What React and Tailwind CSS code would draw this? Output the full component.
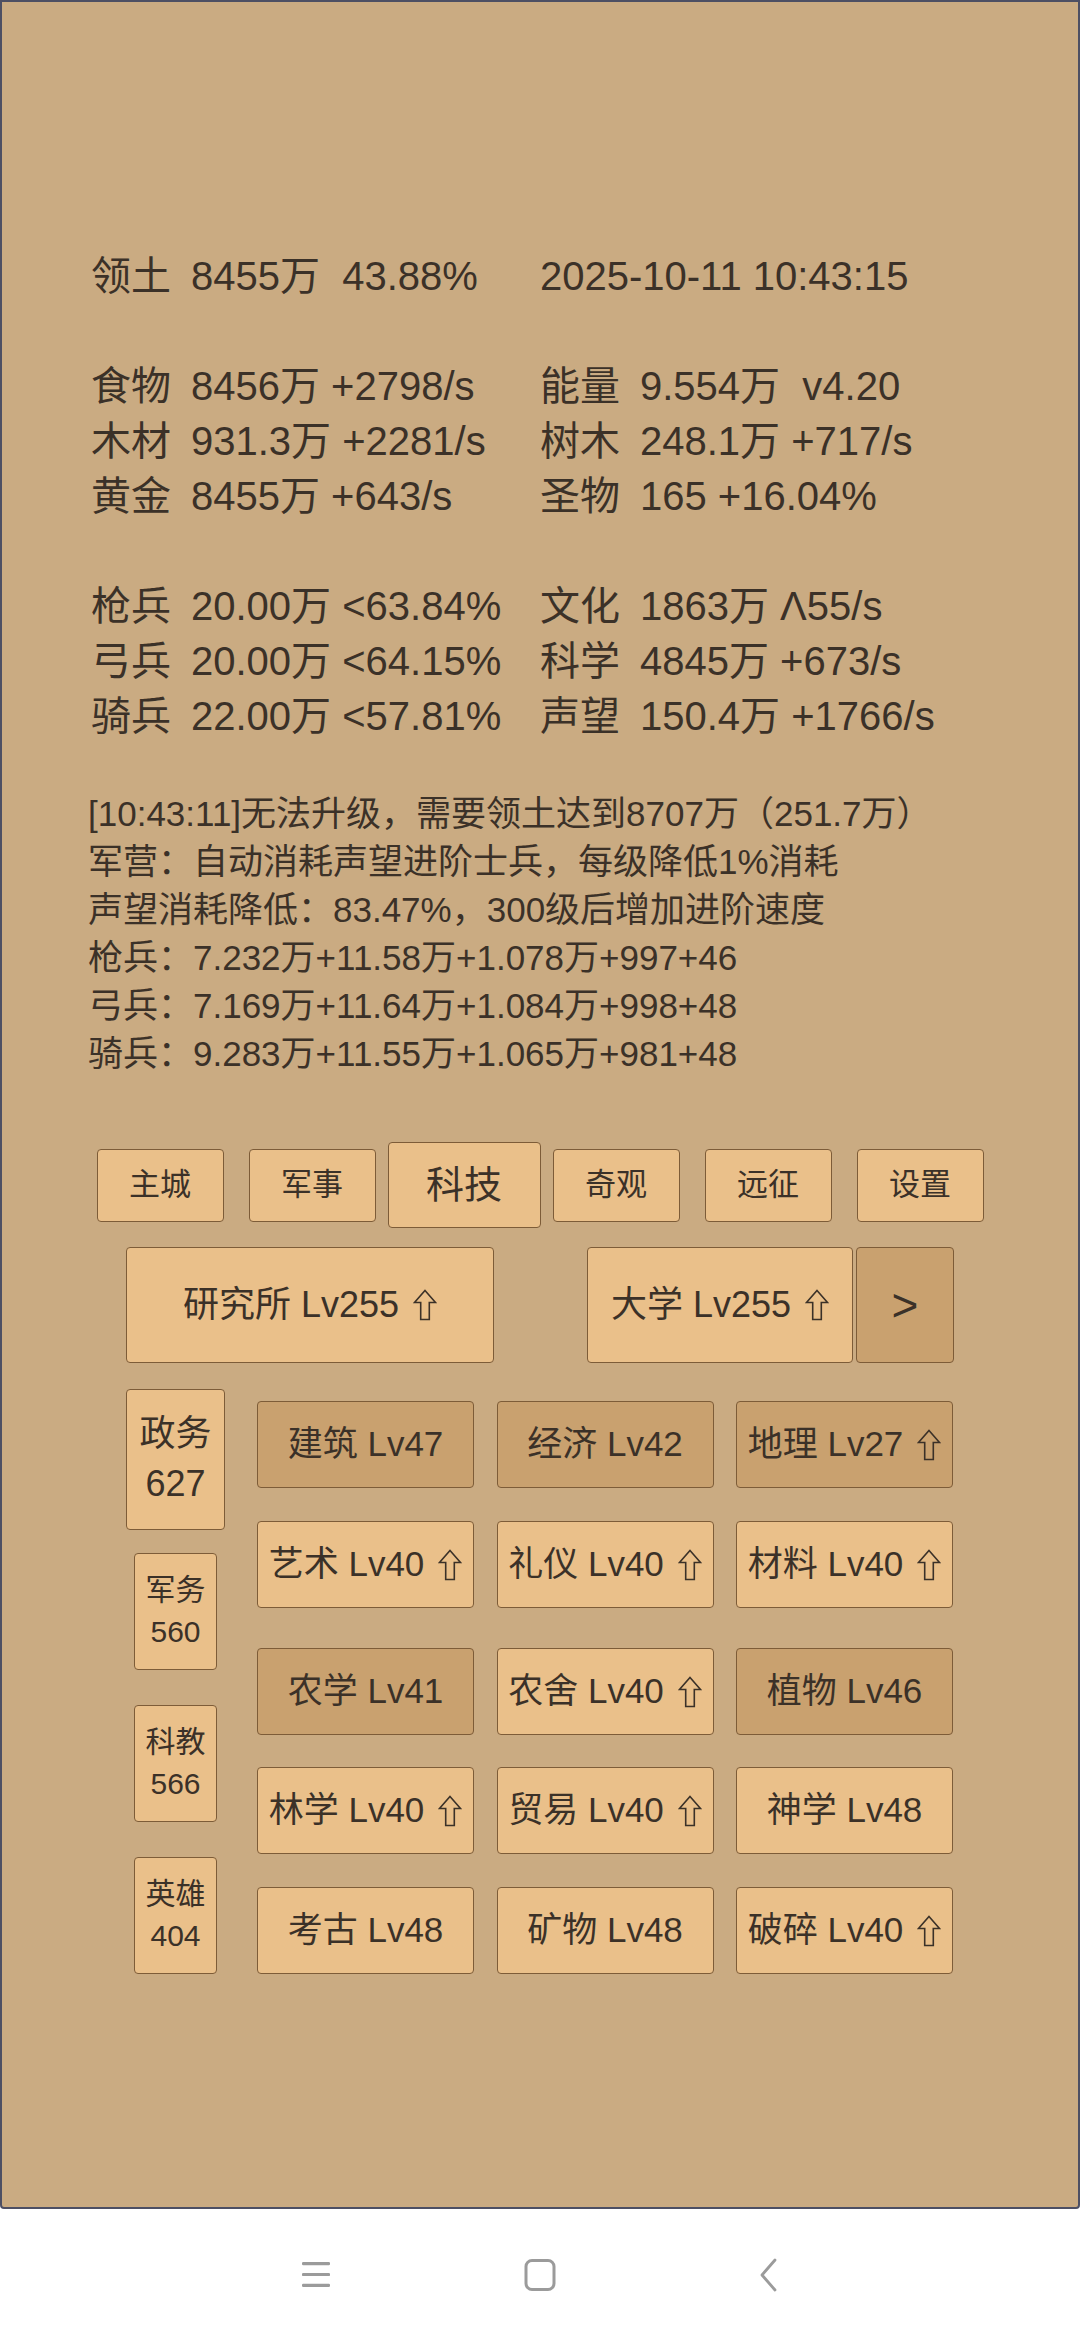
import React from "react";

const Up = () => (
  <svg width="24" height="32" viewBox="0 0 24 32" className="ml-[14px] shrink-0">
    <path
      d="M12 1.5 L22.5 13.5 L16.3 13.5 L16.3 30.5 L7.7 30.5 L7.7 13.5 L1.5 13.5 Z"
      fill="none"
      stroke="#3b3128"
      strokeWidth="1.6"
      strokeLinejoin="miter"
    />
  </svg>
);

function Row({ l, v, rl, rv }) {
  return (
    <div className="flex h-[55px]">
      <div className="w-[449px] flex">
        <span className="w-[100px]">{l}</span>
        <span>{v}</span>
      </div>
      <div className="flex">
        {rl ? <span className="w-[100px]">{rl}</span> : null}
        <span>{rv}</span>
      </div>
    </div>
  );
}

function Cell({ text, up, dark }) {
  return (
    <div
      className={
        dark
          ? "w-[217px] h-[87px] flex items-center justify-center bg-[#c9a16f] border-[1.5px] border-[#7d5c38] rounded-[4px] text-[35px]"
          : "w-[217px] h-[87px] flex items-center justify-center bg-[#eac08a] border-[1.5px] border-[#7d5c38] rounded-[4px] text-[35px]"
      }
    >
      <span className="whitespace-pre">{text}</span>
      {up ? <Up /> : null}
    </div>
  );
}

function Tab({ text, sel }) {
  return sel ? (
    <div className="w-[153px] h-[86px] flex items-center justify-center bg-[#eac08a] border-[1.5px] border-[#7d5c38] rounded-[4px] text-[38px]">
      {text}
    </div>
  ) : (
    <div className="w-[127px] h-[73px] flex items-center justify-center bg-[#eac08a] border-[1.5px] border-[#7d5c38] rounded-[4px] text-[31px]">
      {text}
    </div>
  );
}

function Side({ a, b, sel }) {
  return (
    <div className="h-[152px] flex items-center justify-center">
      {sel ? (
        <div className="w-[99px] h-[141px] flex flex-col items-center justify-center bg-[#eac08a] border-[1.5px] border-[#7d5c38] rounded-[4px] text-[36px] leading-[50px]">
          <span>{a}</span>
          <span>{b}</span>
        </div>
      ) : (
        <div className="w-[83px] h-[117px] flex flex-col items-center justify-center bg-[#eac08a] border-[1.5px] border-[#7d5c38] rounded-[4px] text-[30px] leading-[42px]">
          <span>{a}</span>
          <span>{b}</span>
        </div>
      )}
    </div>
  );
}

export default function App() {
  const rows = [
    [
      { text: "建筑 Lv47", dark: true },
      { text: "经济 Lv42", dark: true },
      { text: "地理 Lv27", dark: true, up: true },
    ],
    [
      { text: "艺术 Lv40", up: true },
      { text: "礼仪 Lv40", up: true },
      { text: "材料 Lv40", up: true },
    ],
    [
      { text: "农学 Lv41", dark: true },
      { text: "农舍 Lv40", up: true },
      { text: "植物 Lv46", dark: true },
    ],
    [
      { text: "林学 Lv40", up: true },
      { text: "贸易 Lv40", up: true },
      { text: "神学 Lv48" },
    ],
    [
      { text: "考古 Lv48" },
      { text: "矿物 Lv48" },
      { text: "破碎 Lv40", up: true },
    ],
  ];
  const rowMt = ["mt-0", "mt-[33px]", "mt-[40px]", "mt-[32px]", "mt-[33px]"];

  return (
    <div className="w-[1080px] h-[2340px] bg-white flex flex-col font-['Liberation_Sans','Noto_Sans_CJK_SC',sans-serif] text-[#3b3128]">
      <div className="h-[2209px] shrink-0 bg-[#caab82] border-2 border-[#4d4f63] rounded-b-[4px] flex flex-col">
        {/* stats */}
        <div className="pt-[247px] pl-[89px] text-[40px] leading-[55px] whitespace-pre">
          <Row l="领土" v="8455万  43.88%" rv="2025-10-11 10:43:15" />
          <div className="h-[55px]" />
          <Row l="食物" v="8456万 +2798/s" rl="能量" rv="9.554万  v4.20" />
          <Row l="木材" v="931.3万 +2281/s" rl="树木" rv="248.1万 +717/s" />
          <Row l="黄金" v="8455万 +643/s" rl="圣物" rv="165 +16.04%" />
          <div className="h-[55px]" />
          <Row l="枪兵" v="20.00万 <63.84%" rl="文化" rv="1863万 Λ55/s" />
          <Row l="弓兵" v="20.00万 <64.15%" rl="科学" rv="4845万 +673/s" />
          <Row l="骑兵" v="22.00万 <57.81%" rl="声望" rv="150.4万 +1766/s" />
        </div>

        {/* log */}
        <div className="mt-[46px] pl-[86px] text-[35px] leading-[48px] whitespace-pre">
          <div>[10:43:11]无法升级，需要领土达到8707万（251.7万）</div>
          <div>军营：自动消耗声望进阶士兵，每级降低1%消耗</div>
          <div>声望消耗降低：83.47%，300级后增加进阶速度</div>
          <div>枪兵：7.232万+11.58万+1.078万+997+46</div>
          <div>弓兵：7.169万+11.64万+1.084万+998+48</div>
          <div>骑兵：9.283万+11.55万+1.065万+981+48</div>
        </div>

        {/* tabs */}
        <div className="mt-[64px] ml-[82px] w-[912px] h-[86px] grid grid-cols-6 items-center justify-items-center">
          <Tab text="主城" />
          <Tab text="军事" />
          <Tab text="科技" sel />
          <Tab text="奇观" />
          <Tab text="远征" />
          <Tab text="设置" />
        </div>

        {/* buildings */}
        <div className="mt-[19px] ml-[124px] flex h-[116px] text-[36px]">
          <div className="w-[368px] h-[116px] flex items-center justify-center bg-[#eac08a] border-[1.5px] border-[#7d5c38] rounded-[4px]">
            <span className="whitespace-pre">研究所 Lv255</span>
            <Up />
          </div>
          <div className="ml-[93px] w-[266px] h-[116px] flex items-center justify-center bg-[#eac08a] border-[1.5px] border-[#7d5c38] rounded-[4px]">
            <span className="whitespace-pre">大学 Lv255</span>
            <Up />
          </div>
          <div className="ml-[3px] w-[98px] h-[116px] flex items-center justify-center bg-[#c9a16f] border-[1.5px] border-[#7d5c38] rounded-[4px] text-[46px]">
            &gt;
          </div>
        </div>

        {/* tech grid */}
        <div className="mt-[20px] ml-[124px] flex">
          <div className="w-[99px] flex flex-col">
            <Side a="政务" b="627" sel />
            <Side a="军务" b="560" />
            <Side a="科教" b="566" />
            <Side a="英雄" b="404" />
          </div>
          <div className="ml-[32px] pt-[18px] flex flex-col">
            {rows.map((r, i) => (
              <div key={i} className={"grid grid-cols-3 gap-x-[22.5px] " + rowMt[i]}>
                {r.map((c, j) => (
                  <Cell key={j} text={c.text} up={c.up} dark={c.dark} />
                ))}
              </div>
            ))}
          </div>
        </div>
      </div>

      {/* system nav */}
      <div className="flex-1 flex items-center justify-center">
        <svg width="28" height="25" viewBox="0 0 28 25">
          <rect x="0" y="0" width="28" height="3.2" rx="1.2" fill="#9b9b9b" />
          <rect x="0" y="10.9" width="28" height="3.2" rx="1.2" fill="#9b9b9b" />
          <rect x="0" y="21.8" width="28" height="3.2" rx="1.2" fill="#9b9b9b" />
        </svg>
        <svg width="32" height="32" viewBox="0 0 32 32" className="ml-[194px]">
          <rect x="2" y="1.5" width="28" height="29" rx="6" fill="none" stroke="#9b9b9b" strokeWidth="3" />
        </svg>
        <svg width="20" height="34" viewBox="0 0 20 34" className="ml-[202px]">
          <polyline points="17,2 4,17 17,32" fill="none" stroke="#9b9b9b" strokeWidth="2.8" strokeLinecap="round" strokeLinejoin="round" />
        </svg>
      </div>
    </div>
  );
}
